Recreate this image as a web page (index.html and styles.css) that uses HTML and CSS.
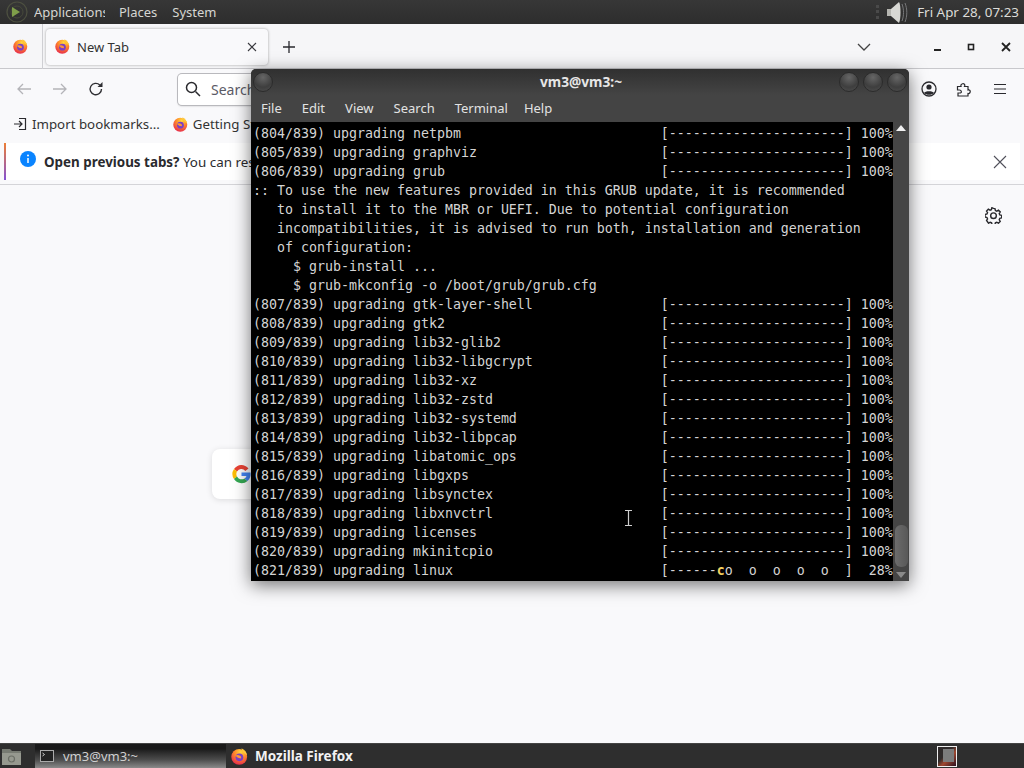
FILE: index.html
```html
<!DOCTYPE html>
<html lang="en">
<head>
<meta charset="utf-8">
<title>Desktop</title>
<link rel="stylesheet" href="styles.css">
</head>
<body>
<svg class="defs" width="0" height="0" aria-hidden="true">
  <defs>
    <radialGradient id="fx" cx="0.6" cy="0.2" r="0.85">
      <stop offset="0" stop-color="#ffd93b"/>
      <stop offset="0.45" stop-color="#ff8a2b"/>
      <stop offset="1" stop-color="#e5244f"/>
    </radialGradient>
    <symbol id="firefox" viewBox="1 1 14.500 15">
      <circle cx="8" cy="8.800" r="7" fill="url(#fx)"/>
      <path d="M10 1.200c2.600 1 4.600 3.400 4.900 6.200L11.500 5z" fill="#ffc93a"/>
      <circle cx="8.200" cy="9.200" r="3.400" fill="#7b3fc4"/>
      <path d="M4.600 7.800c1.200-.8 3-.8 4.400.2.800.6 1 1.600.3 2.200l-2.400-.5z" fill="#ff9a2e"/>
    </symbol>
  </defs>
</svg>

<header class="panel">
  <svg class="panel-logo" width="26" height="24" viewBox="0 0 26 24">
    <circle cx="14" cy="12" r="10" fill="none" stroke="#4d5040" stroke-width="1.200"/>
    <circle cx="14" cy="12" r="6" fill="none" stroke="#46493a" stroke-width="1"/>
    <path d="M9 7l8 5-8 5z" fill="#7f9f4a"/>
  </svg>
  <span class="panel-apps">Applications</span>
  <span class="panel-item">Places</span>
  <span class="panel-item">System</span>
  <span class="panel-grip"></span>
  <svg class="panel-volume" width="24" height="24" viewBox="0 0 24 24">
    <path d="M2 9h4v7H2z" fill="#b5b5b0"/>
    <path d="M6 9l8-7c2 3 2 17 0 21l-8-7z" fill="#d8d8d4"/>
    <path d="M17 4c2 5 2 12 0 17M20 3c2.400 6 2.400 13 0 19" fill="none" stroke="#77787a" stroke-width="1"/>
  </svg>
  <span class="panel-clock">Fri Apr 28, 07:23</span>
</header>

<main class="browser">
  <div class="tabbar">
    <svg class="tabbar-logo"><use href="#firefox"/></svg>
    <div class="tab">
      <svg class="tab-icon"><use href="#firefox"/></svg>
      <span class="tab-title">New Tab</span>
      <svg class="tab-close" width="10" height="10" viewBox="0 0 10 10"><path d="M1 1l8 8M9 1l-8 8" stroke="#3a3a3f" stroke-width="1.100"/></svg>
    </div>
    <svg class="tab-new" width="14" height="14" viewBox="0 0 14 14"><path d="M7 1v12M1 7h12" stroke="#2a2a2e" stroke-width="1.300"/></svg>
    <svg class="tab-list" width="14" height="8" viewBox="0 0 14 8"><path d="M1 1l6 6 6-6" fill="none" stroke="#444" stroke-width="1.300"/></svg>
    <svg class="win-btn win-min" width="10" height="10" viewBox="0 0 10 10"><path d="M1 8h7" stroke="#222" stroke-width="2"/></svg>
    <svg class="win-btn win-max" width="10" height="10" viewBox="0 0 10 10"><rect x="2.500" y="2.500" width="5" height="5" fill="none" stroke="#222" stroke-width="1.600"/></svg>
    <svg class="win-btn win-close" width="10" height="10" viewBox="0 0 10 10"><path d="M1 1l8 8M9 1l-8 8" stroke="#222" stroke-width="1.800"/></svg>
  </div>

  <div class="navbar">
    <svg class="nav-back" width="16" height="14" viewBox="0 0 16 14"><path d="M15 7H2M7 2L2 7l5 5" fill="none" stroke="#b4b4b8" stroke-width="1.300"/></svg>
    <svg class="nav-forward" width="16" height="14" viewBox="0 0 16 14"><path d="M1 7h13M9 2l5 5-5 5" fill="none" stroke="#b4b4b8" stroke-width="1.300"/></svg>
    <svg class="nav-reload" width="16" height="16" viewBox="0 0 16 16"><path d="M13.500 8a5.700 5.700 0 1 1-1.700-4" fill="none" stroke="#2f2f33" stroke-width="1.400"/><path d="M14.500 1v5h-5z" fill="#2f2f33"/></svg>
    <div class="urlbar">
      <svg width="16" height="16" viewBox="0 0 16 16"><circle cx="6.500" cy="6.500" r="5" fill="none" stroke="#2a2a2e" stroke-width="1.500"/><path d="M10.500 10.500l4.500 4.500" stroke="#2a2a2e" stroke-width="1.500"/></svg>
      <span class="url-text">Search with Google or enter address</span>
    </div>
    <svg class="nav-account" width="18" height="18" viewBox="0 0 18 18"><circle cx="9" cy="9" r="7" fill="none" stroke="#2a2a2e" stroke-width="1.300"/><circle cx="9" cy="7" r="2.600" fill="#2a2a2e"/><path d="M4 13c1-2.400 9-2.400 10 0-2 2.400-8 2.400-10 0z" fill="#2a2a2e"/></svg>
    <svg class="nav-ext" width="16" height="16" viewBox="0 0 16 16"><path d="M1.500 5.500h3.500c-1-3 4-4 3.800-1 0 .5-.2.800-.3 1h3.500v3.500c3-1 3 4 0 3.500v2.500h-10v-3h2.500c1.500-.5 1-3-1-3H1.500z" fill="none" stroke="#2a2a2e" stroke-width="1.200"/></svg>
    <svg class="nav-menu" width="14" height="12" viewBox="0 0 14 12"><path d="M1 1.500h12M1 6h12M1 10.500h12" stroke="#2a2a2e" stroke-width="1.200"/></svg>
  </div>

  <div class="bookmarks">
    <svg class="bm-import" width="14" height="14" viewBox="0 0 14 14"><path d="M6 1.500h6.500v11H6M1 7h7.500M6 4l3 3-3 3" fill="none" stroke="#2a2a2e" stroke-width="1.200"/></svg>
    <span class="bm-label">Import bookmarks...</span>
    <svg class="bm-icon"><use href="#firefox"/></svg>
    <span class="bm-label">Getting Started</span>
  </div>

  <div class="notice">
    <svg class="notice-icon" width="16" height="16" viewBox="0 0 16 16"><circle cx="8" cy="8" r="8" fill="#0a84ff"/><path d="M8 7v5" stroke="#fff" stroke-width="1.500"/><circle cx="8" cy="4.500" r="1" fill="#fff"/></svg>
    <span class="notice-text"><b>Open previous tabs?</b> You can restore your previous session from the application menu.</span>
    <svg class="notice-close" width="14" height="14" viewBox="0 0 14 14"><path d="M1 1l12 12M13 1L1 13" stroke="#50505a" stroke-width="1.100"/></svg>
  </div>

  <div class="newtab">
    <svg class="gear" width="17" height="17" viewBox="0 0 24 24"><path d="M12 2l2 .3.700 2.700 1.900.8 2.400-1.400 2.500 2.600-1.400 2.300.8 1.900 2.700.7v3.500l-2.700.7-.8 1.900 1.400 2.300-2.500 2.600-2.400-1.400-1.900.8-.7 2.700h-4l-.7-2.700-1.900-.8-2.400 1.400L2.200 19l1.400-2.300-.8-1.900L.1 14.100v-3.500l2.700-.7.800-1.900L2.200 5.700l2.500-2.600 2.400 1.400 1.900-.8.700-2.700z" fill="none" stroke="#2a2a2e" stroke-width="2"/><circle cx="12" cy="12.300" r="4" fill="none" stroke="#2a2a2e" stroke-width="2"/></svg>
    <div class="search-card">
      <svg width="20" height="20" viewBox="0 0 20 20">
        <path d="M17.500 4.500A9 9 0 0 0 3 5l3 2.500a5.200 5.200 0 0 1 8.300-.6z" fill="#ea4335"/>
        <path d="M3 5a9 9 0 0 0 0 10l3-2.500a5.200 5.200 0 0 1 0-5z" fill="#fbbc05"/>
        <path d="M3 15a9 9 0 0 0 13.500 2L13.500 14.500A5.200 5.200 0 0 1 6 12.500z" fill="#34a853"/>
        <path d="M19.500 8.500H10.500v3.500h5a4.500 4.500 0 0 1-2 2.500l3 2.500c2.500-2 3.500-5 3-8.500z" fill="#4285f4"/>
      </svg>
    </div>
  </div>
</main>

<section class="terminal">
  <div class="term-title">
    <span class="orb"></span>
    <span class="term-name">vm3@vm3:~</span>
    <span class="orb"></span><span class="orb"></span><span class="orb"></span>
  </div>
  <nav class="term-menu">
    <span>File</span><span>Edit</span><span>View</span><span>Search</span><span class="menu-clip">Terminal</span><span>Help</span>
  </nav>
  <div class="term-body">
<pre class="term-text">(804/839) upgrading netpbm                         [----------------------] 100%
(805/839) upgrading graphviz                       [----------------------] 100%
(806/839) upgrading grub                           [----------------------] 100%
:: To use the new features provided in this GRUB update, it is recommended
   to install it to the MBR or UEFI. Due to potential configuration
   incompatibilities, it is advised to run both, installation and generation
   of configuration:
     $ grub-install ...
     $ grub-mkconfig -o /boot/grub/grub.cfg
(807/839) upgrading gtk-layer-shell                [----------------------] 100%
(808/839) upgrading gtk2                           [----------------------] 100%
(809/839) upgrading lib32-glib2                    [----------------------] 100%
(810/839) upgrading lib32-libgcrypt                [----------------------] 100%
(811/839) upgrading lib32-xz                       [----------------------] 100%
(812/839) upgrading lib32-zstd                     [----------------------] 100%
(813/839) upgrading lib32-systemd                  [----------------------] 100%
(814/839) upgrading lib32-libpcap                  [----------------------] 100%
(815/839) upgrading libatomic_ops                  [----------------------] 100%
(816/839) upgrading libgxps                        [----------------------] 100%
(817/839) upgrading libsynctex                     [----------------------] 100%
(818/839) upgrading libxnvctrl                     [----------------------] 100%
(819/839) upgrading licenses                       [----------------------] 100%
(820/839) upgrading mkinitcpio                     [----------------------] 100%
(821/839) upgrading linux                          [------<span class="pacman">c</span>o  o  o  o  o  ]  28%</pre>
    <div class="scrollbar">
      <svg class="scroll-up" width="10" height="6" viewBox="0 0 10 6"><path d="M5 0l5 6H0z" fill="#f0f0f0"/></svg>
      <div class="scroll-track"><div class="scroll-thumb"></div></div>
      <svg class="scroll-down" width="10" height="6" viewBox="0 0 10 6"><path d="M5 6L0 0h10z" fill="#8a8a8a"/></svg>
    </div>
    <svg class="ibeam" width="7" height="16" viewBox="0 0 7 16"><path d="M0 .5h7M0 15.500h7M3.500 .5v15" stroke="#cfcfcf" stroke-width="1.200" fill="none"/></svg>
  </div>
</section>

<footer class="taskbar">
  <svg class="show-desktop" width="24" height="22" viewBox="0 0 24 22"><path d="M2 4h8l2 2h9v14H2z" fill="#777b72"/><path d="M2 8h19v12H2z" fill="#96998f"/><circle cx="11.500" cy="14" r="3" fill="none" stroke="#6b6f66" stroke-width="1.200"/></svg>
  <div class="task task-active">
    <svg width="14" height="12" viewBox="0 0 14 12"><rect x=".5" y=".5" width="13" height="11" fill="#222" stroke="#aaa"/><path d="M2.500 3l2 1.500-2 1.500" stroke="#ccc" fill="none"/></svg>
    <span>vm3@vm3:~</span>
  </div>
  <div class="task task-firefox">
    <svg class="task-fx"><use href="#firefox"/></svg>
    <span>Mozilla Firefox</span>
  </div>
  <div class="pager"><div class="pager-win"></div></div>
</footer>
</body>
</html>
```
FILE: styles.css
```css
* { box-sizing: border-box; }
html, body { margin: 0; padding: 0; }
body {
  width: 1024px;
  height: 768px;
  overflow: hidden;
  position: relative;
  display: flex;
  flex-direction: column;
  background: #f9f9fb;
  font-family: "Noto Sans", sans-serif;
}
.defs { position: absolute; }

/* top panel */
.panel {
  height: 24px;
  flex: none;
  display: flex;
  align-items: center;
  background: linear-gradient(#373737, #2d2d2d);
  color: #d6d6d2;
  font-size: 13px;
}
.panel-logo { margin-left: 3px; flex: none; }
.panel-apps { margin-left: 5px; width: 71px; overflow: hidden; white-space: nowrap; }
.panel-item { margin-left: 14px; }
.panel-item + .panel-item { margin-left: 15px; }
.panel-grip { margin-left: auto; width: 4px; height: 14px; border-left: 3px dotted #4a4a4a; }
.panel-volume { margin-left: 5px; }
.panel-clock { margin-left: 8px; margin-right: 5px; color: #dcdcd8; font-size: 13.4px; white-space: nowrap; }

/* firefox window */
.browser { flex: 1; display: flex; flex-direction: column; min-height: 0; }
.tabbar {
  height: 45px;
  flex: none;
  display: flex;
  align-items: center;
  padding-top: 1px;
  background: #f6f6f8;
  border-bottom: 1px solid #c8c8cc;
}
.tabbar-logo { width: 15px; height: 15px; margin-left: 13px; flex: none; }
.tab {
  width: 222px;
  height: 36px;
  margin-left: 18px;
  display: flex;
  align-items: center;
  background: #f9f9fb;
  border-radius: 4px;
  box-shadow: 0 0 3px rgba(0, 0, 0, .35);
  position: relative;
  flex: none;
}
.tabbar-logo + .tab::before {
  content: "";
  position: absolute;
  left: -4px;
  top: -5px;
  bottom: -4px;
  border-left: 1px solid #cfcfd3;
}
.tab-icon { width: 15px; height: 15px; margin-left: 9px; flex: none; }
.tab-title { margin-left: 7px; font-size: 13px; color: #333; flex: 1; }
.tab-close { margin-right: 11px; }
.tab-new { margin-left: 14px; }
.tab-list { margin-left: auto; }
.win-btn { flex: none; }
.win-min { margin-left: 62px; }
.win-max { margin-left: 23px; }
.win-close { margin-left: 25px; margin-right: 13px; }

.navbar {
  height: 40px;
  flex: none;
  display: flex;
  align-items: center;
  background: #f9f9fb;
}
.nav-back { margin-left: 16px; }
.nav-forward { margin-left: 20px; }
.nav-reload { margin-left: 20px; }
.urlbar {
  width: 700px;
  height: 31px;
  margin-left: 74px;
  padding-left: 7px;
  display: flex;
  align-items: center;
  gap: 10px;
  background: #fff;
  border-radius: 4px;
  box-shadow: 0 0 0 1px #b9b9bd, 0 1px 2px rgba(0, 0, 0, .25);
  flex: none;
}
.url-text { font-size: 14px; color: #5b5b66; white-space: nowrap; }
.nav-account { margin-left: 42px; flex: none; }
.nav-ext { margin-left: 18px; flex: none; }
.nav-menu { margin-left: 21px; flex: none; }

.bookmarks {
  height: 32px;
  flex: none;
  display: flex;
  align-items: center;
  padding-bottom: 2px;
  background: #f9f9fb;
  font-size: 13.3px;
  color: #333;
}
.bm-import { margin-left: 13px; margin-right: 5px; }
.bm-icon { width: 15px; height: 15px; margin-left: 13px; margin-right: 5px; }

.notice {
  height: 37px;
  margin: 2px 4px 4px 4px;
  flex: none;
  display: flex;
  align-items: center;
  background: #fff;
  border-left: 2px solid #a052d0;
  border-image: linear-gradient(#f08030, #8050d8) 1;
  font-size: 13.4px;
  color: #2a2a2e;
}
.notice-icon { margin-left: 14px; margin-top: -5px; flex: none; }
.notice-text { margin-left: 8px; white-space: nowrap; overflow: hidden; flex: 1; }
.notice-close { margin-left: 20px; margin-right: 13px; flex: none; }

.newtab {
  flex: 1;
  border-top: 1px solid #d4d4d8;
  background: #f9f9fb;
  display: flex;
  flex-direction: column;
  min-height: 0;
}
.gear { align-self: flex-end; margin: 22px 22px 0 0; }
.search-card {
  width: 500px;
  height: 50px;
  margin: 225px 0 0 212px;
  padding-left: 19px;
  display: flex;
  align-items: center;
  background: #fff;
  border-radius: 8px;
  box-shadow: 0 1px 6px rgba(0, 0, 0, .12);
}

/* terminal window */
.terminal {
  position: absolute;
  left: 251px;
  top: 69px;
  width: 658px;
  height: 512px;
  display: flex;
  flex-direction: column;
  border-radius: 5px 5px 0 0;
  background: #3f3f3f;
  box-shadow: 0 4px 18px rgba(0, 0, 0, .55);
  overflow: hidden;
}
.term-title {
  height: 26px;
  flex: none;
  display: flex;
  align-items: center;
  padding: 0 2px 0 2px;
  gap: 4px;
  background: linear-gradient(#303030, #444);
}
.term-name {
  flex: 1;
  text-align: center;
  padding: 0 0 2px 50px;
  color: #e6e6e6;
  font-size: 13.7px;
  font-weight: 700;
}
.orb {
  width: 20px;
  height: 20px;
  flex: none;
  border-radius: 50%;
  background: radial-gradient(circle at 50% 25%, #666, #3e3e3e 60%, #505050);
  border: 1px solid #2c2c2c;
}
.term-menu {
  height: 27px;
  flex: none;
  display: flex;
  align-items: center;
  padding: 0 0 2px 10px;
  gap: 20px;
  background: #444;
  color: #e2e2e2;
  font-size: 13px;
}
.term-menu .menu-clip { margin-right: -4px; }
.term-body {
  flex: 1;
  display: flex;
  background: #000;
  position: relative;
  min-height: 0;
}
.term-text {
  margin: 0;
  width: 642px;
  padding: 2px 0 0 2px;
  font-family: "DejaVu Sans Mono", monospace;
  font-size: 13.29px;
  line-height: 19px;
  color: #d4d4d4;
  overflow: hidden;
  flex: none;
}
.pacman { color: #f2d060; font-weight: 700; }
.scrollbar {
  width: 16px;
  flex: none;
  display: flex;
  flex-direction: column;
  align-items: center;
  background: #454545;
  padding: 3px 0;
}
.scroll-track {
  flex: 1;
  width: 100%;
  display: flex;
  flex-direction: column;
  justify-content: flex-end;
  align-items: center;
}
.scroll-thumb {
  width: 13px;
  height: 42px;
  margin-bottom: 5px;
  border-radius: 6px;
  background: linear-gradient(90deg, #6c6c6c, #585858);
}
.ibeam { position: absolute; left: 374px; top: 388px; }

/* bottom panel */
.taskbar {
  height: 25px;
  flex: none;
  display: flex;
  align-items: center;
  background: #2e2e2e;
  border-top: 1px solid #444;
}
.show-desktop { margin-left: 0; flex: none; }
.task {
  height: 24px;
  display: flex;
  align-items: center;
  font-size: 13px;
  flex: none;
}
.task-active {
  width: 191px;
  margin-left: 11px;
  padding-left: 5px;
  gap: 9px;
  background: linear-gradient(#1a1a1a 20%, #4c4c4c 65%, #8a8a8a);
  color: #d0d0d0;
}
.task-firefox {
  margin-left: 5px;
  gap: 7px;
  color: #f2f2f2;
  font-weight: 700;
  font-size: 13.5px;
}
.task-fx { width: 17px; height: 17px; }
.pager {
  width: 20px;
  height: 21px;
  margin-left: auto;
  margin-right: 67px;
  border: 1px solid #eee;
  padding: 2px 2px 4px 5px;
  background: linear-gradient(135deg, #2f2a2a 40%, #a04830 60%, #2a1020);
  flex: none;
}
.pager-win { width: 100%; height: 100%; background: #7c7c7c; }
```
